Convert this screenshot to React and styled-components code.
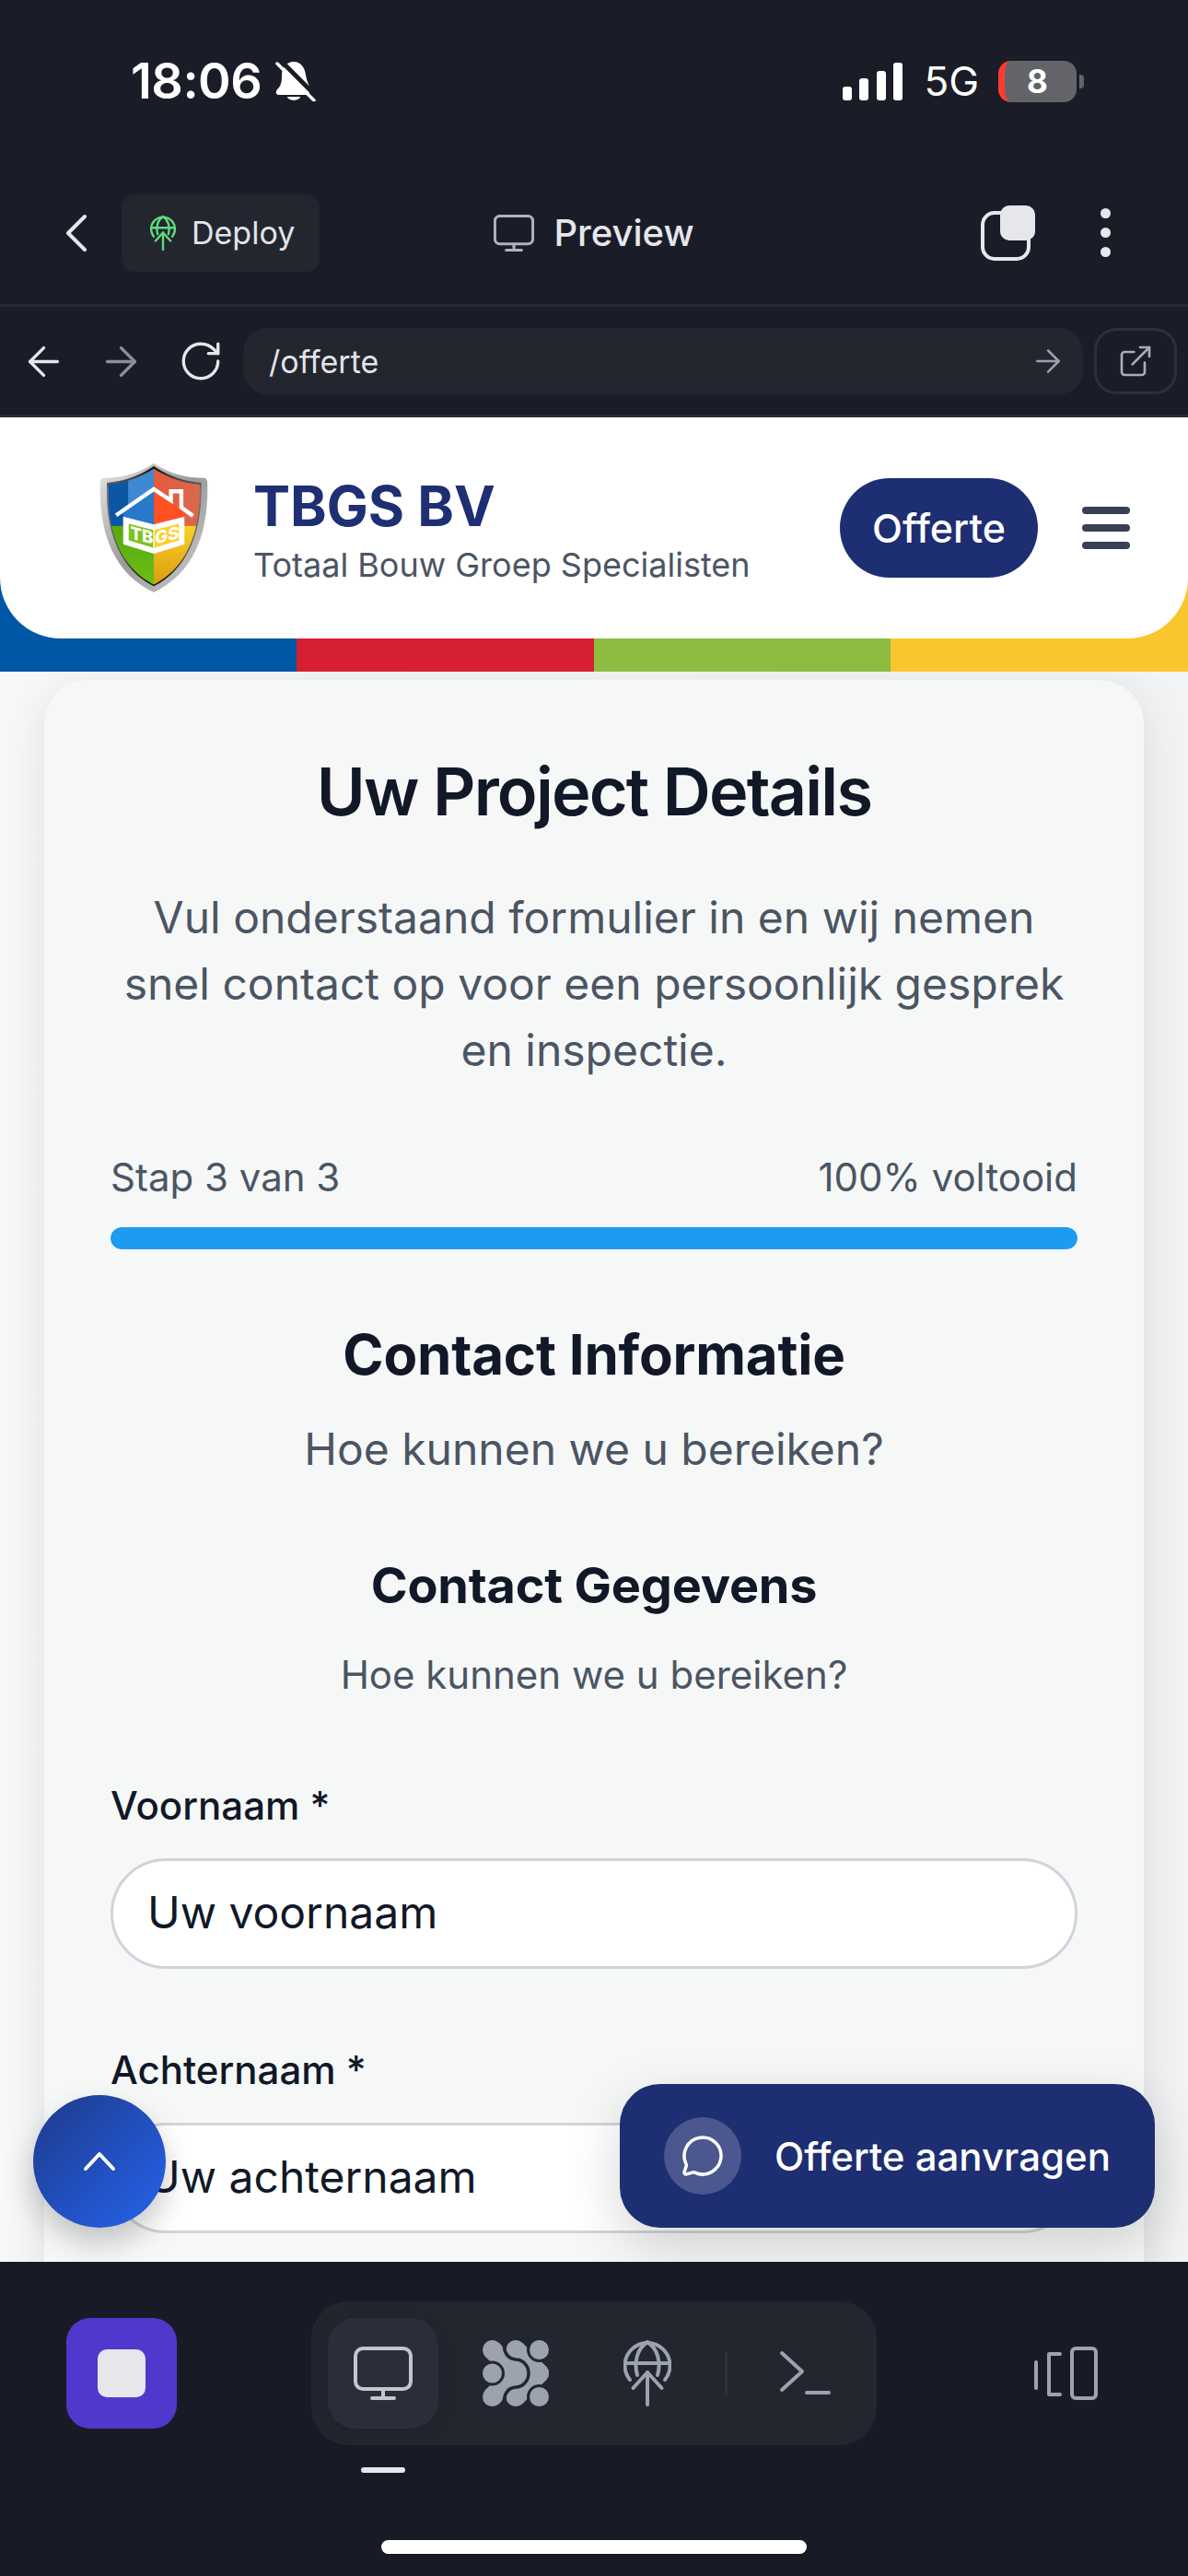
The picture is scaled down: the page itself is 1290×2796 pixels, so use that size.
import React from "react";
import styled, { createGlobalStyle } from "styled-components";
import { ArrowLeft, ArrowRight, RotateCw, ExternalLink, MessageCircle } from "lucide-react";

const GlobalStyle = createGlobalStyle`
  html, body {
    margin: 0;
    padding: 0;
    background: #1a1d27;
  }
  * {
    box-sizing: border-box;
  }
`;

const Page = styled.div`
  width: 1290px;
  height: 2796px;
  display: flex;
  flex-direction: column;
  overflow: hidden;
  background: #1a1d27;
  font-family: Inter, "Liberation Sans", sans-serif;
`;

const StatusBar = styled.div`
  height: 172px;
  display: flex;
  align-items: center;
  justify-content: space-between;
  padding: 4px 113px 0 142px;
  color: #fff;
`;

const StatusGroup = styled.div`
  display: flex;
  align-items: center;
  gap: ${(p) => p.$gap || 0}px;
`;

const Time = styled.span`
  font-size: 54px;
  font-weight: 600;
  line-height: 60px;
  letter-spacing: -0.5px;
`;

const Network = styled.span`
  margin: 0 21px 0 23px;
  font-size: 44px;
  font-weight: 400;
  line-height: 50px;
`;

const Battery = styled.div`
  width: 85px;
  height: 45px;
  border-radius: 14px;
  overflow: hidden;
  background: #636469;
  border-left: 7px solid #ff3b30;
  padding-right: 7px;
  display: flex;
  align-items: center;
  justify-content: center;
  font-size: 35px;
  font-weight: 700;
`;

const BatteryNub = styled.div`
  width: 5px;
  height: 15px;
  margin-left: 3px;
  border-radius: 0 4px 4px 0;
  background: #636469;
`;

const NavRow = styled.div`
  height: 161px;
  padding: 3px 71px 0;
  display: grid;
  grid-template-columns: 1fr auto 1fr;
  align-items: center;
  border-bottom: 3px solid #272a35;
`;

const NavLeft = styled.div`
  display: flex;
  align-items: center;
  gap: 37px;
`;

const DeployPill = styled.div`
  width: 215px;
  height: 84px;
  border-radius: 14px;
  background: #23262f;
  display: flex;
  align-items: center;
  gap: 17px;
  padding-left: 31px;
  color: #e2e3e9;
  font-size: 34px;
`;

const PreviewTitle = styled.div`
  display: flex;
  align-items: center;
  gap: 21px;
  color: #e5e7eb;
  font-size: 40px;
  font-weight: 500;
`;

const NavRight = styled.div`
  display: flex;
  align-items: center;
  justify-content: flex-end;
  gap: 70px;
  margin-right: 13px;
`;

const KebabDots = styled.div`
  display: flex;
  flex-direction: column;
  gap: 10px;
`;

const Dot = styled.span`
  display: block;
  width: 11px;
  height: 11px;
  border-radius: 50%;
  background: #e5e7eb;
`;

const UrlRow = styled.div`
  height: 120px;
  padding: 23px 12px 0 22px;
  display: flex;
  align-items: flex-start;
  border-bottom: 3px solid #272a35;
`;

const BrowserButton = styled.div`
  height: 72px;
  display: flex;
  align-items: center;
  margin-right: ${(p) => p.$gap}px;
  color: ${(p) => p.$color};
`;

const UrlPill = styled.div`
  flex: 1;
  height: 72px;
  border-radius: 26px;
  background: #23262f;
  display: flex;
  align-items: center;
  justify-content: space-between;
  padding: 0 18px 0 28px;
  color: #e2e3e9;
  font-size: 34px;
`;

const ExternalButton = styled.div`
  width: 90px;
  height: 72px;
  margin-left: 12px;
  border: 3px solid #2d303b;
  border-radius: 24px;
  display: flex;
  align-items: center;
  justify-content: center;
  color: #a9adb5;
`;

const HeaderWrap = styled.div`
  height: 276px;
  background: linear-gradient(
    to right,
    #0057a5 25%,
    #d61f31 25% 50%,
    #8fbb40 50% 75%,
    #fbc62d 75%
  );
`;

const Header = styled.header`
  height: 240px;
  background: #fff;
  border-radius: 0 0 66px 66px;
  display: flex;
  align-items: center;
  padding: 0 63px 0 107px;
`;

const Brand = styled.div`
  display: flex;
  flex-direction: column;
  margin-left: 48px;
  padding-top: 7px;
  flex: 1;
`;

const BrandName = styled.div`
  font-size: 60px;
  font-weight: 700;
  line-height: 70px;
  color: #1e2f73;
  margin-top: -3px;
`;

const BrandTag = styled.div`
  font-size: 36px;
  line-height: 46px;
  margin-top: 6px;
  color: #4b5563;
`;

const QuoteButton = styled.div`
  width: 215px;
  height: 108px;
  border-radius: 54px;
  background: #1e2e72;
  color: #fff;
  font-size: 43px;
  font-weight: 500;
  display: flex;
  align-items: center;
  justify-content: center;
`;

const Burger = styled.div`
  width: 52px;
  margin-left: 48px;
  display: flex;
  flex-direction: column;
  gap: 11px;
`;

const BurgerBar = styled.span`
  display: block;
  height: 8px;
  border-radius: 4px;
  background: #374151;
`;

const Content = styled.main`
  position: relative;
  flex: 1;
  min-height: 0;
  overflow: hidden;
  padding: 9px 48px 0;
  background: linear-gradient(to right, #f7f8f9, #f2f3f5);
`;

const Card = styled.section`
  height: 2200px;
  border-radius: 48px;
  background: #f6f8f8;
  box-shadow: 0 10px 50px rgba(0, 0, 0, 0.1);
  padding: 77px 72px 0;
`;

const CardTitle = styled.h1`
  margin: 0;
  font-size: 72px;
  font-weight: 600;
  line-height: 88px;
  letter-spacing: -1.8px;
  text-align: center;
  color: #111827;
`;

const Lead = styled.p`
  margin: 57px 0 0;
  font-size: 48px;
  line-height: 72px;
  text-align: center;
  color: #4b5563;
`;

const ProgressLabels = styled.div`
  margin-top: 77px;
  display: flex;
  justify-content: space-between;
  font-size: 42px;
  line-height: 50px;
  color: #4b5563;
`;

const ProgressTrack = styled.div`
  margin-top: 29px;
  height: 24px;
  border-radius: 12px;
  background: #e5e7eb;
  overflow: hidden;
`;

const ProgressFill = styled.div`
  height: 100%;
  border-radius: 12px;
  background: #1d9bf0;
`;

const SectionTitle = styled.h2`
  margin: ${(p) => p.$top}px 0 0;
  font-size: ${(p) => p.$size}px;
  font-weight: 700;
  line-height: ${(p) => p.$size + 12}px;
  letter-spacing: -0.2px;
  text-align: center;
  color: #111827;
`;

const SectionText = styled.p`
  margin: ${(p) => p.$top}px 0 0;
  font-size: ${(p) => p.$size}px;
  line-height: ${(p) => p.$size + 10}px;
  text-align: center;
  color: #4b5563;
`;

const Label = styled.label`
  display: block;
  margin-top: ${(p) => p.$top}px;
  font-size: 42px;
  font-weight: 500;
  line-height: 50px;
  color: #111827;
`;

const TextField = styled.div`
  height: 120px;
  margin-top: 32px;
  border: 3px solid #d1d3dc;
  border-radius: 60px;
  background: #fff;
  display: flex;
  align-items: center;
  padding: 0 0 3px 37px;
  font-size: 48px;
  color: #111827;
`;

const ScrollUp = styled.div`
  position: absolute;
  left: 36px;
  bottom: 37px;
  width: 144px;
  height: 144px;
  border-radius: 50%;
  background: linear-gradient(135deg, #1e3a8a, #2563eb);
  box-shadow: 0 16px 32px rgba(0, 0, 0, 0.22);
  display: flex;
  align-items: center;
  justify-content: center;
`;

const QuoteFloat = styled.div`
  position: absolute;
  right: 36px;
  bottom: 37px;
  width: 581px;
  height: 156px;
  border-radius: 44px;
  background: #1e2e72;
  box-shadow: 0 20px 60px rgba(0, 0, 0, 0.16);
  display: flex;
  align-items: center;
  gap: 36px;
  padding-left: 48px;
  color: #fff;
  font-size: 42px;
  font-weight: 500;
`;

const ChatBadge = styled.div`
  width: 84px;
  height: 84px;
  border-radius: 50%;
  background: rgba(255, 255, 255, 0.2);
  display: flex;
  align-items: center;
  justify-content: center;
`;

const BottomBar = styled.div`
  height: 341px;
  flex-shrink: 0;
  background: #181b25;
  padding-top: 43px;
  display: flex;
  flex-direction: column;
`;

const BottomRow = styled.div`
  height: 156px;
  display: flex;
  align-items: center;
  padding: 0 98px 0 72px;
`;

const StopButton = styled.div`
  width: 120px;
  height: 120px;
  border-radius: 26px;
  background: #5138cc;
  display: flex;
  align-items: center;
  justify-content: center;
`;

const StopSquare = styled.span`
  display: block;
  width: 52px;
  height: 52px;
  border-radius: 10px;
  background: #e5e7eb;
`;

const TabGroup = styled.div`
  width: 614px;
  height: 156px;
  margin-left: 146px;
  margin-right: auto;
  border-radius: 40px;
  background: #23262f;
  display: flex;
  align-items: center;
  gap: 24px;
  padding: 0 18px;
`;

const Tab = styled.div`
  width: 120px;
  height: 120px;
  border-radius: 30px;
  display: flex;
  align-items: center;
  justify-content: center;
  background: ${(p) => (p.$active ? "#2b2d38" : "transparent")};
  box-shadow: ${(p) => (p.$active ? "0 4px 24px rgba(0, 0, 0, 0.12)" : "none")};
`;

const TabDivider = styled.span`
  display: block;
  width: 3px;
  height: 48px;
  background: #2f323d;
`;

const ActiveMark = styled.div`
  width: 48px;
  height: 6px;
  margin: 24px 0 0 392px;
  border-radius: 3px;
  background: #e5e7eb;
`;

const HomeIndicator = styled.div`
  width: 462px;
  height: 15px;
  margin: 73px auto 0;
  border-radius: 8px;
  background: #fff;
`;

const BellOff = () => (
  <svg width="44" height="44" viewBox="0 0 44 44">
    <path d="M20 1C28 1 32 8 33 15C34 24 39 28 37 34L36 37H3C0 36 0 33 3 30C7 26 7 20 7 15C7 8 12 1 20 1Z" fill="#fff" />
    <path d="M13 39H27C26 44 14 44 13 39Z" fill="#fff" />
    <line x1="5" y1="-1" x2="46" y2="40" stroke="#1a1d27" strokeWidth="5" />
    <line x1="2" y1="3" x2="42" y2="43" stroke="#fff" strokeWidth="3.5" strokeLinecap="round" />
  </svg>
);

const SignalBars = () => (
  <svg width="65" height="41" viewBox="0 0 65 41" fill="#fff">
    <rect x="0" y="26" width="10" height="15" rx="3" />
    <rect x="18" y="17" width="10" height="24" rx="3" />
    <rect x="37" y="9" width="10" height="32" rx="3" />
    <rect x="55" y="0" width="10" height="41" rx="3" />
  </svg>
);

const ChevronBack = () => (
  <svg width="24" height="42" viewBox="0 0 24 42" fill="none" stroke="#e5e7eb" strokeWidth="4" strokeLinecap="round" strokeLinejoin="round">
    <polyline points="21,3 3,21 21,39" />
  </svg>
);

const GlobeUp = ({ width, height, color, strokeWidth }) => (
  <svg width={width} height={height} viewBox="0 0 52 72" fill="none" stroke={color} strokeWidth={strokeWidth} strokeLinecap="round" strokeLinejoin="round">
    <path d="M7 43A24.5 24.5 0 1 1 45 43" />
    <path d="M15 38C11 24 15 9 26 2C37 9 41 24 37 38" />
    <line x1="2" y1="25" x2="50" y2="25" />
    <polyline points="10.5,52 26,35 41.5,52" />
    <line x1="26" y1="35" x2="26" y2="70" />
  </svg>
);

const MonitorIcon = ({ width, height, color, strokeWidth }) => (
  <svg width={width} height={height} viewBox="0 0 64 58" fill="none" stroke={color} strokeWidth={strokeWidth} strokeLinecap="round">
    <rect x="2" y="2" width="60" height="44" rx="8" />
    <line x1="32" y1="46" x2="32" y2="56" />
    <line x1="20" y1="56" x2="44" y2="56" />
  </svg>
);

const LayersIcon = () => (
  <svg width="60" height="60" viewBox="0 0 60 60" fill="none">
    <rect x="2" y="8" width="50" height="50" rx="13" stroke="#e5e7eb" strokeWidth="4" />
    <rect x="21" y="0" width="38" height="38" rx="10" fill="#e5e7eb" />
  </svg>
);

const BoltIcon = () => (
  <svg width="72" height="72" viewBox="0 0 72 72" fill="#9ca3af">
    <path d="M10.5 10.5L36 36L10.5 61.5" fill="none" stroke="#9ca3af" strokeWidth="21" strokeLinejoin="round" />
    <path d="M36 10.5L61.5 36L36 61.5" fill="none" stroke="#9ca3af" strokeWidth="21" strokeLinejoin="round" />
    <circle cx="10.5" cy="10.5" r="10.5" />
    <circle cx="36" cy="10.5" r="10.5" />
    <circle cx="36" cy="36" r="10.5" />
    <circle cx="10.5" cy="61.5" r="10.5" />
    <circle cx="36" cy="61.5" r="10.5" />
    <circle cx="61.5" cy="36" r="10.5" />
    <path d="M23 2C23 12 26 20 36 21C44 21 50 28 50 36C50 44 44 51 36 51C26 52 23 60 23 70" fill="none" stroke="#23262f" strokeWidth="3.5" />
    <circle cx="10.5" cy="36" r="13.5" fill="#23262f" />
    <circle cx="61.5" cy="10.5" r="13.5" fill="#23262f" />
    <circle cx="61.5" cy="61.5" r="13.5" fill="#23262f" />
    <circle cx="10.5" cy="36" r="10.5" />
    <circle cx="61.5" cy="10.5" r="10.5" />
    <circle cx="61.5" cy="61.5" r="10.5" />
  </svg>
);

const TerminalIcon = () => (
  <svg width="56" height="50" viewBox="0 0 56 50" fill="none" stroke="#9ca3af" strokeWidth="4" strokeLinecap="round" strokeLinejoin="round">
    <polyline points="3,3 25,23 3,43" />
    <line x1="30" y1="46" x2="54" y2="46" />
  </svg>
);

const DeviceIcon = () => (
  <svg width="69" height="58" viewBox="0 0 69 58" fill="none" stroke="#9ca3af" strokeWidth="4" strokeLinecap="round" strokeLinejoin="round">
    <line x1="2" y1="17" x2="2" y2="45" />
    <path d="M28 8H16V52H28" />
    <rect x="41" y="2" width="26" height="54" rx="4" />
  </svg>
);

const ChevronUp = () => (
  <svg width="36" height="22" viewBox="0 0 36 22" fill="none" stroke="#fff" strokeWidth="4" strokeLinecap="round" strokeLinejoin="round">
    <polyline points="3,19 18,3 33,19" />
  </svg>
);

const ShieldLogo = () => (
  <svg width="120" height="143" viewBox="140 98 360 430" style={{ flexShrink: 0 }}>
    <defs>
      <linearGradient id="chrome" x1="0" y1="0" x2="1" y2="1">
        <stop offset="0" stopColor="#e8e8e8" />
        <stop offset="0.5" stopColor="#9a9a9a" />
        <stop offset="1" stopColor="#d0d0d0" />
      </linearGradient>
      <linearGradient id="rim" x1="0" y1="0" x2="0" y2="1">
        <stop offset="0" stopColor="#0c0c0c" />
        <stop offset="0.2" stopColor="#777" />
        <stop offset="0.7" stopColor="#555" />
        <stop offset="1" stopColor="#0c0c0c" />
      </linearGradient>
      <linearGradient id="redQuarter" x1="0" y1="0" x2="1" y2="0">
        <stop offset="0" stopColor="#e65a3c" />
        <stop offset="1" stopColor="#d9694e" />
      </linearGradient>
      <linearGradient id="yellowQuarter" x1="0" y1="0" x2="0" y2="1">
        <stop offset="0" stopColor="#fbd026" />
        <stop offset="1" stopColor="#d99c10" />
      </linearGradient>
      <linearGradient id="greenQuarter" x1="0" y1="0" x2="0" y2="1">
        <stop offset="0" stopColor="#58a80e" />
        <stop offset="1" stopColor="#6cc018" />
      </linearGradient>
      <clipPath id="inner">
        <path d="M320 118C270 150 220 165 172 170C165 320 210 440 320 497C430 440 475 320 470 170C420 165 370 150 320 118Z" />
      </clipPath>
    </defs>
    <path d="M320 100C270 135 210 150 155 148Q145 150 145 165C140 330 190 460 320 522C450 460 500 330 495 165Q495 150 485 148C430 150 370 135 320 100Z" fill="url(#chrome)" />
    <path d="M320 110C270 144 218 160 167 164C160 320 208 445 320 502C432 445 480 320 475 164C422 160 370 144 320 110Z" fill="url(#rim)" />
    <g clipPath="url(#inner)">
      <rect x="160" y="110" width="80" height="195" fill="#0d55a5" />
      <rect x="236" y="110" width="84" height="195" fill="#3f88d2" />
      <rect x="320" y="110" width="160" height="195" fill="url(#redQuarter)" />
      <rect x="160" y="305" width="160" height="200" fill="url(#greenQuarter)" />
      <rect x="320" y="305" width="160" height="200" fill="url(#yellowQuarter)" />
    </g>
    <path d="M320 188L220 258V300L320 310Z" fill="#2878cc" />
    <path d="M320 188L420 258V300L320 310Z" fill="#ff5026" />
    <polyline points="197,270 320,185 376,222 376,192 410,192 410,245 448,272" fill="none" stroke="#fff" strokeWidth="13" />
    <path d="M220 275L320 300L420 275V365L320 396L220 365Z" fill="#fff" />
    <path d="M238 298L318 318V376L238 352Z" fill="#7cc41c" />
    <path d="M322 318L402 298V352L322 376Z" fill="#fbd026" />
    <text transform="translate(243 346) skewY(14)" fontFamily="Inter, sans-serif" fontSize="56" fontWeight="800" fill="#fff">TB</text>
    <text transform="translate(324 365) skewY(-14)" fontFamily="Inter, sans-serif" fontSize="56" fontWeight="800" fill="#fff">GS</text>
  </svg>
);

export default function App() {
  return (
    <Page>
      <GlobalStyle />
      <StatusBar>
        <StatusGroup $gap={15}>
          <Time>18:06</Time>
          <BellOff />
        </StatusGroup>
        <StatusGroup>
          <SignalBars />
          <Network>5G</Network>
          <Battery>8</Battery>
          <BatteryNub />
        </StatusGroup>
      </StatusBar>

      <NavRow>
        <NavLeft>
          <ChevronBack />
          <DeployPill>
            <GlobeUp width={28} height={38} color="#5fdc7f" strokeWidth={4.5} />
            Deploy
          </DeployPill>
        </NavLeft>
        <PreviewTitle>
          <MonitorIcon width={44} height={40} color="#b0b3ba" strokeWidth={4.5} />
          Preview
        </PreviewTitle>
        <NavRight>
          <LayersIcon />
          <KebabDots>
            <Dot />
            <Dot />
            <Dot />
          </KebabDots>
        </NavRight>
      </NavRow>

      <UrlRow>
        <BrowserButton $gap={33} $color="#e5e7eb">
          <ArrowLeft size={51} strokeWidth={1.6} />
        </BrowserButton>
        <BrowserButton $gap={36} $color="#8b8f98">
          <ArrowRight size={51} strokeWidth={1.6} />
        </BrowserButton>
        <BrowserButton $gap={21} $color="#e5e7eb">
          <RotateCw size={50} strokeWidth={1.6} />
        </BrowserButton>
        <UrlPill>
          /offerte
          <ArrowRight size={40} strokeWidth={1.5} color="#9ca3af" />
        </UrlPill>
        <ExternalButton>
          <ExternalLink size={40} strokeWidth={1.6} />
        </ExternalButton>
      </UrlRow>

      <HeaderWrap>
        <Header>
          <ShieldLogo />
          <Brand>
            <BrandName>TBGS BV</BrandName>
            <BrandTag>Totaal Bouw Groep Specialisten</BrandTag>
          </Brand>
          <QuoteButton>Offerte</QuoteButton>
          <Burger>
            <BurgerBar />
            <BurgerBar />
            <BurgerBar />
          </Burger>
        </Header>
      </HeaderWrap>

      <Content>
        <Card>
          <CardTitle>Uw Project Details</CardTitle>
          <Lead>
            Vul onderstaand formulier in en wij nemen
            <br />
            snel contact op voor een persoonlijk gesprek
            <br />
            en inspectie.
          </Lead>
          <ProgressLabels>
            <span>Stap 3 van 3</span>
            <span>100% voltooid</span>
          </ProgressLabels>
          <ProgressTrack>
            <ProgressFill style={{ width: "100%" }} />
          </ProgressTrack>
          <SectionTitle $top={78} $size={60}>Contact Informatie</SectionTitle>
          <SectionText $top={38} $size={48}>Hoe kunnen we u bereiken?</SectionText>
          <SectionTitle $top={86} $size={54}>Contact Gegevens</SectionTitle>
          <SectionText $top={38} $size={42}>Hoe kunnen we u bereiken?</SectionText>
          <Label $top={91}>Voornaam *</Label>
          <TextField>Uw voornaam</TextField>
          <Label $top={85}>Achternaam *</Label>
          <TextField>Uw achternaam</TextField>
        </Card>
        <ScrollUp>
          <ChevronUp />
        </ScrollUp>
        <QuoteFloat>
          <ChatBadge>
            <MessageCircle size={48} strokeWidth={1.75} />
          </ChatBadge>
          Offerte aanvragen
        </QuoteFloat>
      </Content>

      <BottomBar>
        <BottomRow>
          <StopButton>
            <StopSquare />
          </StopButton>
          <TabGroup>
            <Tab $active>
              <MonitorIcon width={64} height={58} color="#c3c6cd" strokeWidth={4} />
            </Tab>
            <Tab>
              <BoltIcon />
            </Tab>
            <Tab>
              <GlobeUp width={52} height={72} color="#9ca3af" strokeWidth={4} />
            </Tab>
            <TabDivider />
            <Tab>
              <TerminalIcon />
            </Tab>
          </TabGroup>
          <DeviceIcon />
        </BottomRow>
        <ActiveMark />
        <HomeIndicator />
      </BottomBar>
    </Page>
  );
}
